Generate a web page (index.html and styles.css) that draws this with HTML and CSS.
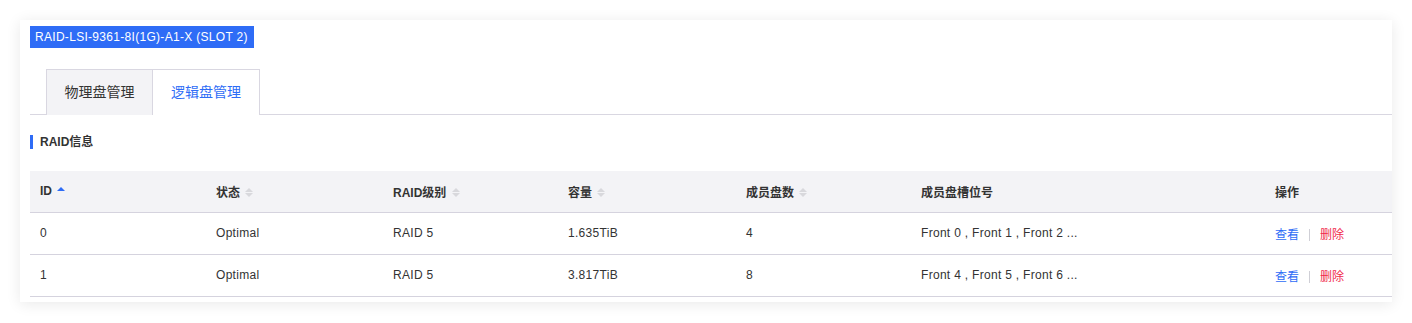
FILE: index.html
```html
<!DOCTYPE html>
<html lang="zh">
<head>
<meta charset="utf-8">
<link rel="stylesheet" href="styles.css">
</head>
<body>
<div class="page">
  <div class="card">
    <div class="badge">RAID-LSI-9361-8I(1G)-A1-X (SLOT 2)</div>
    <div class="tabs">
      <div class="tab">物理盘管理</div>
      <div class="tab active">逻辑盘管理</div>
    </div>
    <div class="section-title">RAID信息</div>
    <table class="grid">
      <colgroup>
        <col style="width:176px"><col style="width:177px"><col style="width:175px"><col style="width:178px"><col style="width:175px"><col style="width:354px"><col>
      </colgroup>
      <thead>
        <tr>
          <th>ID <span class="sort asc"><i class="up"></i><i class="down"></i></span></th>
          <th>状态 <span class="sort"><i class="up"></i><i class="down"></i></span></th>
          <th>RAID级别 <span class="sort"><i class="up"></i><i class="down"></i></span></th>
          <th>容量 <span class="sort"><i class="up"></i><i class="down"></i></span></th>
          <th>成员盘数 <span class="sort"><i class="up"></i><i class="down"></i></span></th>
          <th>成员盘槽位号</th>
          <th>操作</th>
        </tr>
      </thead>
      <tbody>
        <tr>
          <td>0</td><td>Optimal</td><td>RAID 5</td><td>1.635TiB</td><td>4</td><td>Front 0 , Front 1 , Front 2 ...</td>
          <td><a class="link">查看</a><span class="sep"></span><a class="link danger">删除</a></td>
        </tr>
        <tr>
          <td>1</td><td>Optimal</td><td>RAID 5</td><td>3.817TiB</td><td>8</td><td>Front 4 , Front 5 , Front 6 ...</td>
          <td><a class="link">查看</a><span class="sep"></span><a class="link danger">删除</a></td>
        </tr>
      </tbody>
    </table>
  </div>
</div>
</body>
</html>
```
FILE: styles.css
```css
* { box-sizing: border-box; }
html, body { margin: 0; padding: 0; background: #fff; }
body {
  font-family: "Liberation Sans", "Noto Sans CJK SC", sans-serif;
  font-size: 12px;
  color: #333;
  letter-spacing: 0.3px;
}
.page { padding: 20px; }
.card {
  width: 1372px;
  height: 282px;
  background: #fff;
  box-shadow: 0 2px 14px rgba(0, 0, 0, 0.09);
  padding: 6px 0 6px 10px;
}
.badge {
  display: inline-block;
  height: 22px;
  line-height: 22px;
  padding: 0 5px;
  background: #2e6cf6;
  color: #fff;
  font-size: 12px;
  width: 224px;
  white-space: nowrap;
}
.tabs {
  display: flex;
  margin-top: 21px;
  padding-left: 16px;
  border-bottom: 1px solid #d9d7e1;
  height: 46px;
}
.tab {
  width: 107px;
  height: 46px;
  line-height: 44px;
  text-align: center;
  font-size: 14px;
  letter-spacing: 0;
  color: #333;
  background: #f3f3f6;
  border: 1px solid #d9d7e1;
  border-bottom: none;
}
.tab + .tab { border-left: none; }
.tab.active {
  background: #fff;
  color: #2e6cf6;
  height: 46px;
  margin-bottom: -1px;
}
.section-title {
  margin-top: 20px;
  height: 14px;
  line-height: 14px;
  border-left: 3px solid #2e6cf6;
  padding-left: 7px;
  font-weight: bold;
  color: #333;
  letter-spacing: 0;
}
.grid {
  margin-top: 22px;
  width: 1362px;
  border-collapse: collapse;
  table-layout: fixed;
}
.grid th, .grid td {
  text-align: left;
  padding: 0 10px;
  white-space: nowrap;
  border-bottom: 1px solid #d5d3de;
}
.grid th {
  height: 41px;
  background: #f3f3f6;
  font-weight: bold;
  color: #333;
  letter-spacing: 0;
}
.grid td {
  height: 42px;
  color: #333;
}
.sort {
  display: inline-flex;
  flex-direction: column;
  vertical-align: middle;
  margin-left: 2px;
  margin-top: -2px;
  gap: 1px;
}
.sort i {
  display: block;
  width: 0;
  height: 0;
  border-left: 4px solid transparent;
  border-right: 4px solid transparent;
}
.sort .up { border-bottom: 4px solid #d8d8dc; }
.sort .down { border-top: 4px solid #d8d8dc; }
.sort.asc .up { border-bottom-color: #2e6cf6; }
.sort.asc .down { border-top-color: transparent; }
.link { color: #2e6cf6; cursor: pointer; letter-spacing: 0; }
.link.danger { color: #f0294b; }
.sep {
  display: inline-block;
  width: 1px;
  height: 12px;
  background: #cfcfd6;
  margin: 0 10px;
  vertical-align: middle;
}
```
